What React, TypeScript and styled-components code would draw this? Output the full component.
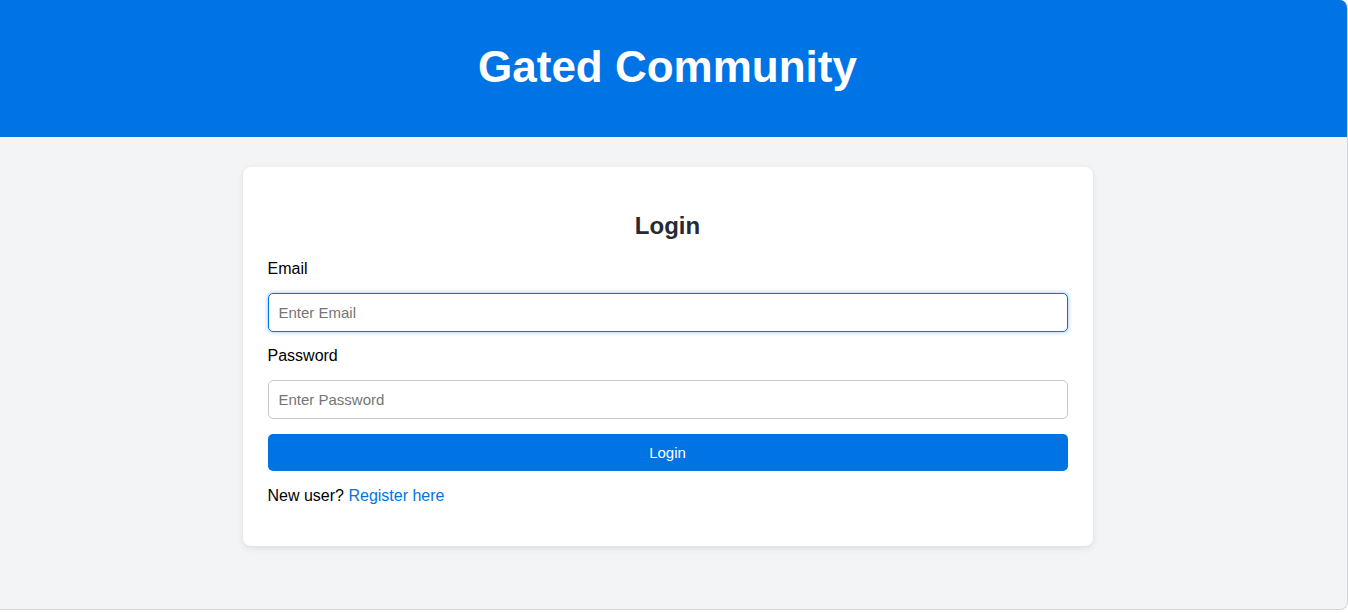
import React from "react";
import styled, { createGlobalStyle, css } from "styled-components";

const GlobalStyle = createGlobalStyle`
  html, body {
    margin: 0;
    padding: 0;
    background: #ffffff;
  }
  body {
    font-family: "Liberation Sans", Arial, sans-serif;
  }
  * { box-sizing: border-box; }
`;

const Frame = styled.div`
  width: 1348px;
  height: 610px;
  background: #f3f4f6;
  border-right: 1px solid #d4d6da;
  border-bottom: 1px solid #d4d6da;
  border-radius: 0 8px 8px 0;
  overflow: hidden;
  display: flex;
  flex-direction: column;
  padding-right: 12px;
`;

const Header = styled.header`
  height: 137px;
  background: #0074e4;
  margin-right: -12px;
  padding: 0 12px 4px 0;
  display: flex;
  align-items: center;
  justify-content: center;
`;

const Title = styled.h1`
  margin: 0;
  color: #ffffff;
  font-size: 44px;
  font-weight: 700;
`;

const Main = styled.main`
  display: flex;
  justify-content: center;
  padding-top: 30px;
`;

const Card = styled.section`
  width: 850px;
  background: #ffffff;
  border-radius: 8px;
  box-shadow: 0 2px 6px rgba(0, 0, 0, 0.1);
  padding: 25px 25px 25px;
`;

const CardTitle = styled.h2`
  margin: 20px 0;
  text-align: center;
  color: #262b33;
  font-size: 24px;
  font-weight: 700;
`;

const Form = styled.form`
  display: flex;
  flex-direction: column;
  gap: 15px;
`;

const Label = styled.label`
  font-size: 16px;
  color: #000;
`;

const Input = styled.input<{ $active?: boolean }>`
  width: 100%;
  padding: 10px;
  font-size: 15px;
  font-family: "Liberation Sans", Arial, sans-serif;
  border: 1px solid #c8c8c8;
  border-radius: 5px;
  outline: none;
  color: #222;
  &::placeholder {
    color: #757575;
  }
  ${(p) =>
    p.$active &&
    css`
      border-color: #0074e4;
      box-shadow: 0 0 4px rgba(0, 116, 228, 0.45);
    `}
`;

const Button = styled.button`
  height: 37px;
  border: none;
  border-radius: 5px;
  background: #0074e4;
  color: #ffffff;
  font-size: 15px;
  font-family: "Liberation Sans", Arial, sans-serif;
  cursor: pointer;
`;

const Note = styled.p`
  margin: 16px 0;
  font-size: 16px;
  color: #000;
`;

const Link = styled.a`
  color: #0074e4;
  text-decoration: none;
`;

export default function App() {
  return (
    <>
      <GlobalStyle />
      <Frame>
        <Header>
          <Title>Gated Community</Title>
        </Header>
        <Main>
          <Card>
            <CardTitle>Login</CardTitle>
            <Form onSubmit={(e) => e.preventDefault()}>
              <Label htmlFor="email">Email</Label>
              <Input id="email" type="email" placeholder="Enter Email" $active autoFocus />
              <Label htmlFor="password">Password</Label>
              <Input id="password" type="password" placeholder="Enter Password" />
              <Button type="submit">Login</Button>
            </Form>
            <Note>
              New user? <Link href="#">Register here</Link>
            </Note>
          </Card>
        </Main>
      </Frame>
    </>
  );
}
